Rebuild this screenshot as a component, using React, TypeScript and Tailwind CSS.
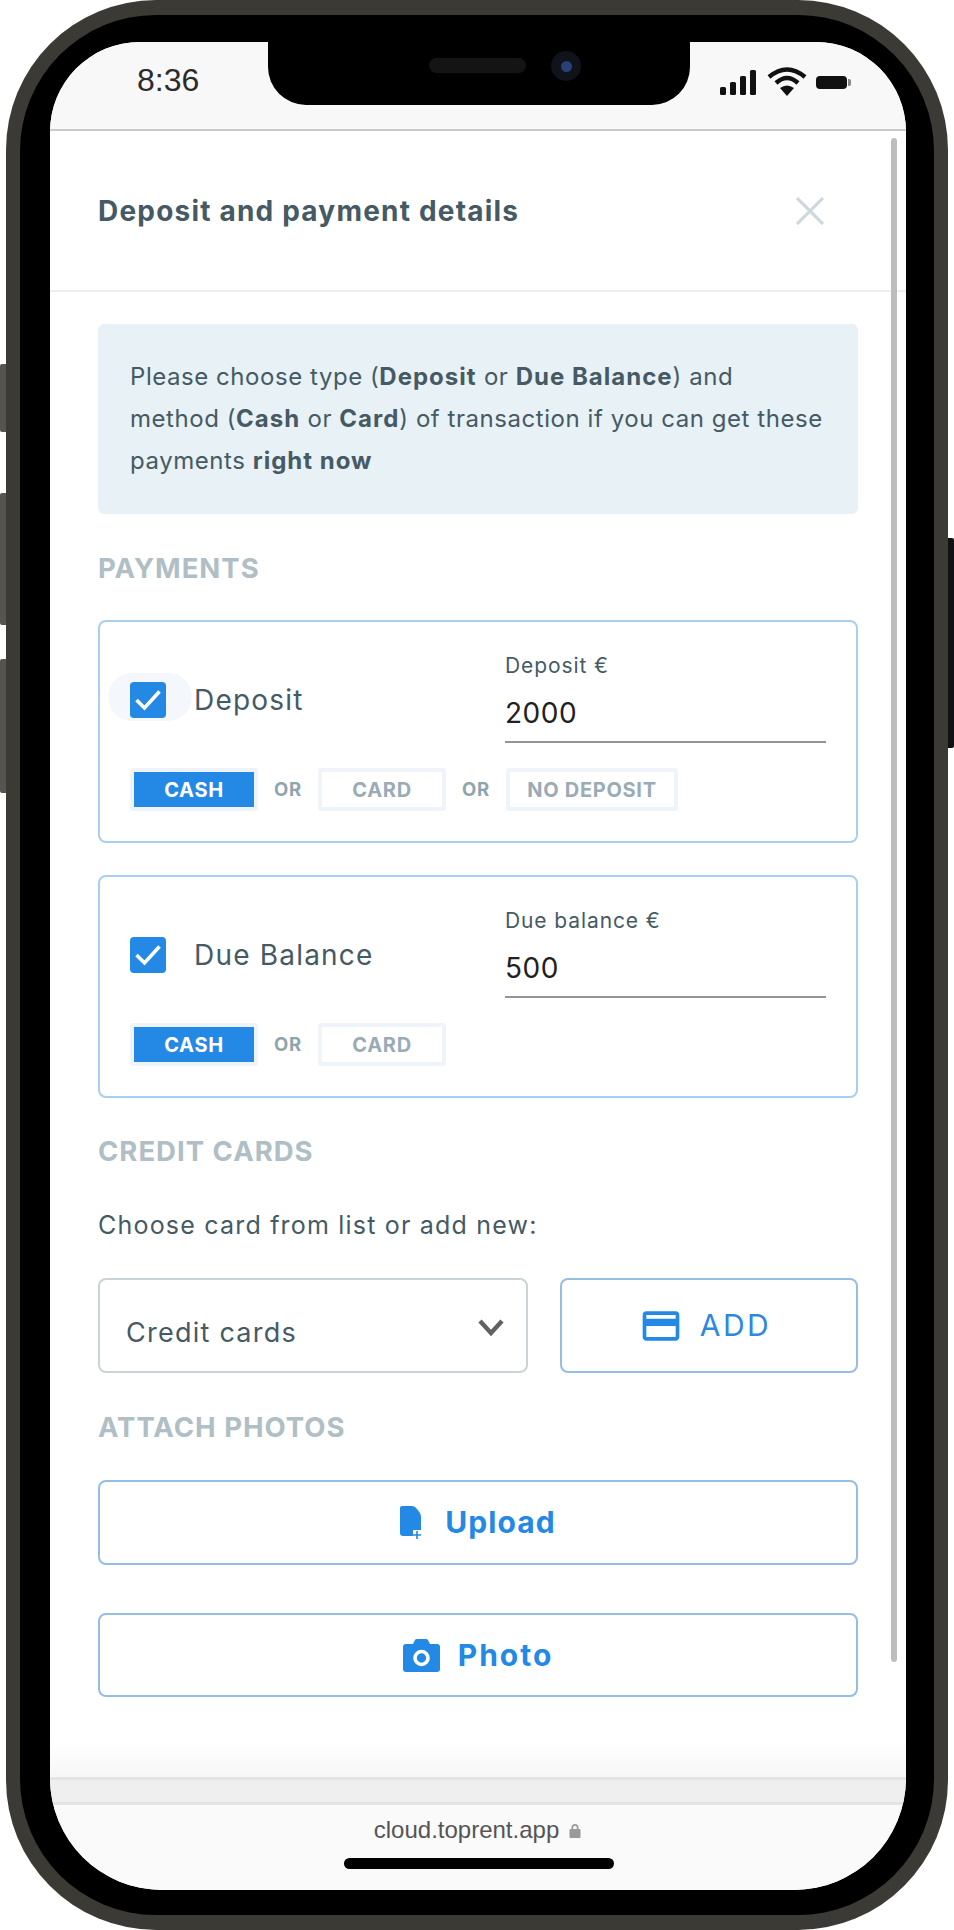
import React from "react";

const sans = "font-['Inter','Liberation_Sans',sans-serif]";

function Check() {
  return (
    <span className="w-[36px] h-[36px] rounded-[4px] bg-[#2389e5] flex items-center justify-center">
      <svg width="28" height="28" viewBox="0 0 28 28" fill="none">
        <path d="M2.5 14 L10.5 22 L25.5 5.5" stroke="#fff" strokeWidth="3.6" />
      </svg>
    </span>
  );
}

function Pill({ label, active, w }: { label: string; active?: boolean; w: string }) {
  return (
    <span
      className={`${w} h-[43px] rounded-[3px] border-[4px] border-[#eef4fa] flex items-center justify-center text-[20px] font-bold tracking-[0.7px] ${
        active ? "bg-[#2389e5] text-white" : "bg-white text-[#9aabb6]"
      }`}
    >
      {label}
    </span>
  );
}

function Or() {
  return <span className="w-[60px] text-center text-[18.5px] font-bold tracking-[0.8px] text-[#90a4ae]">OR</span>;
}

function Heading({ children, mt }: { children: React.ReactNode; mt: string }) {
  return <div className={`${mt} h-[32px] leading-[32px] text-[27.5px] font-bold tracking-[1px] text-[#b0bec5]`}>{children}</div>;
}

function B({ children }: { children: React.ReactNode }) {
  return <b className="tracking-[1px]">{children}</b>;
}

function PayCard({
  title,
  label,
  value,
  halo,
  mt,
  extra,
}: {
  title: string;
  label: string;
  value: string;
  halo?: boolean;
  mt: string;
  extra?: boolean;
}) {
  return (
    <div className={`${mt} rounded-[8px] border-2 border-[#a8cff0] pt-[30px] pb-[30px] pl-[30px] pr-[30px] bg-white`}>
      <div className="flex items-center">
        <div className="flex-1 flex items-center gap-[28px] relative mt-[5px]">
          {halo && <span className="absolute left-[-22px] top-[-6px] w-[84px] h-[48px] rounded-full bg-[#f4f8fd]" />}
          <span className="relative">
            <Check />
          </span>
          <span className="relative text-[28px] tracking-[1.2px] text-[#455a64]">{title}</span>
        </div>
        <div className="w-[321px]">
          <div className="h-[28px] leading-[28px] text-[21px] tracking-[0.9px] text-[#455a64]">{label}</div>
          <div className="mt-[14px] h-[49px] leading-[38px] pb-[9px] border-b-2 border-[#949494] text-[28px] tracking-[0.5px] text-[#212121]">
            {value}
          </div>
        </div>
      </div>
      <div className="mt-[25px] flex items-center">
        <Pill label="CASH" active w="w-[128px]" />
        <Or />
        <Pill label="CARD" w="w-[128px]" />
        {extra && (
          <>
            <Or />
            <Pill label="NO DEPOSIT" w="w-[172px]" />
          </>
        )}
      </div>
    </div>
  );
}

export default function App() {
  return (
    <div className={`relative w-[954px] h-[1930px] bg-white overflow-hidden ${sans}`}>
      {/* side buttons */}
      <span className="absolute left-0 top-[364px] w-[8px] h-[68px] bg-[#55554f] rounded-l-[2px]" />
      <span className="absolute left-0 top-[493px] w-[8px] h-[132px] bg-[#55554f] rounded-l-[2px]" />
      <span className="absolute left-0 top-[659px] w-[8px] h-[134px] bg-[#55554f] rounded-l-[2px]" />
      <span className="absolute right-0 top-[538px] w-[8px] h-[210px] bg-[#111] rounded-r-[2px]" />

      {/* frame */}
      <div className="relative mx-[6px] h-[1930px] rounded-[150px] bg-[#3b3a35] pt-[15px] pb-[15px] pl-[14px] pr-[14px]">
        <div className="h-full rounded-[136px] bg-black pt-[27px] pb-[25px] pl-[30px] pr-[28px]">
          {/* screen */}
          <div className="relative h-full flex flex-col overflow-hidden rounded-t-[90px] rounded-b-[112px] bg-white">
            {/* status bar */}
            <div className="relative h-[89px] shrink-0 bg-[#f8f8f8] border-b-2 border-[#c9c9c9]">
              <span className="absolute left-[87px] top-[18px] font-['Liberation_Sans',sans-serif] text-[32px] leading-[40px] text-[#2b2b2b]">
                8:36
              </span>
              <svg className="absolute left-[670px] top-[28px]" width="38" height="25" viewBox="0 0 38 25" fill="#111">
                <rect x="0" y="17" width="6" height="8" rx="1.5" />
                <rect x="10" y="12" width="6" height="13" rx="1.5" />
                <rect x="20" y="6" width="6" height="19" rx="1.5" />
                <rect x="30" y="0" width="6" height="25" rx="1.5" />
              </svg>
              <svg className="absolute left-[717px] top-[25px]" width="40" height="30" viewBox="0 0 40 30" fill="none" stroke="#111" strokeWidth="4.5">
                <path d="M2 10 Q20 -5 38 10" />
                <path d="M9 16 Q20 6 31 16" />
                <path d="M20 29 L13 21 Q20 16 27 21 Z" fill="#111" stroke="none" />
              </svg>
              <span className="absolute left-[766px] top-[34px] w-[31px] h-[13px] rounded-[4px] bg-[#111]" />
              <span className="absolute left-[798px] top-[37px] w-[3px] h-[7px] rounded-r-[2px] bg-[#888]" />
              {/* notch */}
              <div className="absolute left-[218px] top-0 w-[422px] h-[63px] bg-black rounded-b-[38px]">
                <span className="absolute left-[161px] top-[16px] w-[97px] h-[15px] rounded-full bg-[#141414]" />
                <span className="absolute left-[283px] top-[9px] w-[30px] h-[30px] rounded-full bg-[#10131a] flex items-center justify-center">
                  <span className="w-[11px] h-[11px] rounded-full bg-[#2a3f7a]" />
                </span>
              </div>
            </div>

            {/* scrollbar */}
            <span className="absolute left-[841px] top-[96px] w-[6px] h-[1524px] rounded-full bg-[#bdbdbd]" />

            {/* header */}
            <div className="h-[161px] shrink-0 border-b-2 border-[#eceff1] pl-[48px] pr-[82px] flex items-center justify-between">
              <span className="text-[28px] font-bold tracking-[1.2px] text-[#455a64]">Deposit and payment details</span>
              <svg width="28" height="28" viewBox="0 0 28 28" fill="none" stroke="#cfd8dc" strokeWidth="3.2">
                <path d="M1 1 L27 27 M27 1 L1 27" />
              </svg>
            </div>

            {/* content */}
            <div className="px-[48px] pt-[32px] flex-1">
              <div className="rounded-[6px] bg-[#e8f1f5] py-[32px] pl-[32px] pr-[20px] text-[24px] leading-[42px] tracking-[0.55px] text-[#455a64]">
                Please choose type (<B>Deposit</B> or <B>Due Balance</B>) and
                <br />
                method (<B>Cash</B> or <B>Card</B>) of transaction if you can get these
                <br />
                payments <B>right now</B>
              </div>

              <Heading mt="mt-[38px]">PAYMENTS</Heading>
              <PayCard mt="mt-[36px]" title="Deposit" label="Deposit €" value="2000" halo extra />
              <PayCard mt="mt-[32px]" title="Due Balance" label="Due balance €" value="500" />

              <Heading mt="mt-[37px]">CREDIT CARDS</Heading>
              <div className="mt-[42px] h-[32px] leading-[32px] text-[25px] tracking-[1.2px] text-[#455a64]">
                Choose card from list or add new:
              </div>

              <div className="mt-[37px] flex gap-[32px]">
                <div className="relative w-[430px] h-[95px] rounded-[8px] border-2 border-[#ccd3d7] pl-[26px] pt-[36px] text-[27px] leading-[34px] tracking-[1.25px] text-[#455a64]">
                  Credit cards
                  <svg className="absolute left-[378px] top-[39px]" width="26" height="17" viewBox="0 0 26 17" fill="none" stroke="#616161" strokeWidth="4.4">
                    <path d="M2 2 L13 14 L24 2" />
                  </svg>
                </div>
                <div className="flex-1 h-[95px] rounded-[8px] border-2 border-[#95bde6] pr-[8px] flex items-center justify-center gap-[17px] text-[30px] tracking-[2.5px] text-[#2f87de]">
                  <svg width="44" height="44" viewBox="0 0 24 24" fill="#2389e5">
                    <path d="M20 4H4c-1.11 0-1.99.89-1.99 2L2 18c0 1.11.89 2 2 2h16c1.11 0 2-.89 2-2V6c0-1.11-.89-2-2-2zm0 14H4v-6h16v6zm0-10H4V6h16v2z" />
                  </svg>
                  ADD
                </div>
              </div>

              <Heading mt="mt-[38px]">ATTACH PHOTOS</Heading>

              <div className="mt-[37px] h-[85px] rounded-[8px] border-2 border-[#95bde6] flex items-center justify-center gap-[20px] text-[30px] font-bold tracking-[1.1px] text-[#2389e5]">
                <svg width="25" height="34" viewBox="0 0 25 34" fill="#2389e5">
                  <path d="M2 0 H12 Q15 0 17 3 L20 7 Q21 9 21 11 V24 H13 V30 H3 Q0 30 0 27 V2 Q0 0 2 0 Z" />
                  <path d="M17 25 V33 M13 29 H21" stroke="#2389e5" strokeWidth="1.6" fill="none" />
                </svg>
                Upload
              </div>

              <div className="mt-[48px] h-[84px] rounded-[8px] border-2 border-[#95bde6] flex items-center justify-center gap-[18px] text-[30px] font-bold tracking-[2px] text-[#2389e5]">
                <svg width="37" height="33" viewBox="0 0 37 33">
                  <path fill="#2389e5" d="M3 5 H10 L12 1 Q12.5 0 14 0 H23 Q24.5 0 25 1 L27 5 H34 Q37 5 37 8 V30 Q37 33 34 33 H3 Q0 33 0 30 V8 Q0 5 3 5 Z" />
                  <circle cx="18.5" cy="19" r="6.5" fill="none" stroke="#fff" strokeWidth="3.6" />
                </svg>
                Photo
              </div>
            </div>

            {/* browser footer */}
            <div className="h-[37px] shrink-0 bg-gradient-to-b from-white to-[#f7f7f7]" />
            <div className="shrink-0 h-[28px] border-y-[3px] border-[#e4e4e4] bg-[#efefef]" />
            <div className="relative h-[85px] shrink-0 bg-[#fafafa] flex flex-col items-center">
              <div className="mt-[11px] h-[28px] flex items-center gap-[9px] font-['Liberation_Sans',sans-serif] text-[24px] text-[#555]">
                cloud.toprent.app
                <svg width="14" height="15" viewBox="0 0 14 15" fill="#9a9a9a">
                  <path d="M3.5 6 V4.5 a3.5 3.5 0 0 1 7 0 V6 H8.8 V4.5 a1.8 1.8 0 0 0 -3.6 0 V6 Z" />
                  <rect x="1.5" y="6" width="11" height="9" rx="1" />
                </svg>
              </div>
              <span className="mt-[14px] ml-[2px] w-[270px] h-[11px] rounded-full bg-black" />
            </div>
          </div>
        </div>
      </div>
    </div>
  );
}
